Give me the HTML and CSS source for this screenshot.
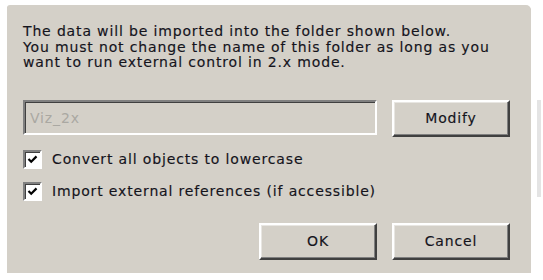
FILE: index.html
```html
<!DOCTYPE html>
<html>
<head>
<meta charset="utf-8">
<link rel="stylesheet" href="styles.css">
</head>
<body>
<div class="stage">
  <div class="dialog">
    <div class="msg">
      <div>The data will be imported into the folder shown below.</div>
      <div>You must not change the name of this folder as long as you</div>
      <div>want to run external control in 2.x mode.</div>
    </div>
    <div class="row">
      <div class="field">Viz_2x</div>
      <div class="btn">Modify</div>
    </div>
    <div class="checks">
      <div class="check"><span class="box"><svg viewBox="0 0 13 13" width="13" height="13"><path d="M2.5 6 L5.2 8.7 L10.5 3.4" fill="none" stroke="#000" stroke-width="2.2"/></svg></span><span>Convert all objects to lowercase</span></div>
      <div class="check"><span class="box"><svg viewBox="0 0 13 13" width="13" height="13"><path d="M2.5 6 L5.2 8.7 L10.5 3.4" fill="none" stroke="#000" stroke-width="2.2"/></svg></span><span>Import external references (if accessible)</span></div>
    </div>
    <div class="actions">
      <div class="btn">OK</div>
      <div class="btn">Cancel</div>
    </div>
  </div>
  <div class="sidebar"></div>
</div>
</body>
</html>
```
FILE: styles.css
```css
html, body {
  margin: 0;
  padding: 0;
  background: #ffffff;
}
body {
  font-family: "DejaVu Sans", sans-serif;
  font-size: 14px;
  letter-spacing: 0.85px;
  color: #14141c;
  -webkit-text-stroke: 0.15px #14141c;
}
.stage {
  display: flex;
  align-items: flex-start;
  padding: 5px 0 0 7px;
}
.dialog {
  width: 524px;
  height: 268px;
  box-sizing: border-box;
  background: #d4d0c8;
  border-radius: 3px 5px 0 0;
  box-shadow: 0 1px 0 #b8b5ae, 0 2px 0 #a6a39d;
  padding: 19px 21px 0 16px;
  display: flex;
  flex-direction: column;
}
.msg {
  line-height: 15.5px;
}
.row {
  display: flex;
  gap: 15px;
  margin-top: 29px;
  align-items: flex-start;
}
.field {
  width: 354px;
  height: 35px;
  box-sizing: border-box;
  border-style: solid;
  border-width: 2px;
  border-color: #808080 #ffffff #ffffff #808080;
  box-shadow: inset 1px 1px 0 #404040, inset -1px -1px 0 #d4d0c8;
  color: #aaa8a2;
  -webkit-text-stroke: 0;
  padding: 6px 0 0 5px;
  line-height: 20px;
}
.btn {
  width: 118px;
  height: 37px;
  box-sizing: border-box;
  border-style: solid;
  border-width: 2px;
  border-color: #ffffff #404040 #404040 #ffffff;
  box-shadow: inset -1px -1px 0 #808080, inset 1px 1px 0 #e8e6e2;
  display: flex;
  align-items: center;
  justify-content: center;
}
.checks {
  display: flex;
  flex-direction: column;
  gap: 11px;
  margin-top: 12px;
}
.check {
  display: flex;
  align-items: center;
  gap: 10px;
  height: 21px;
}
.box {
  width: 19px;
  height: 19px;
  box-sizing: border-box;
  background: #ffffff;
  border-style: solid;
  border-width: 2px;
  border-color: #808080 #ffffff #ffffff #808080;
  box-shadow: inset 1px 1px 0 #404040;
  display: flex;
  align-items: center;
  justify-content: center;
}
.actions {
  display: flex;
  justify-content: flex-end;
  gap: 15px;
  margin-top: 21px;
}
.sidebar {
  width: 4px;
  height: 97px;
  margin: 95px 0 0 6px;
  background: #e4e4e4;
}
```
